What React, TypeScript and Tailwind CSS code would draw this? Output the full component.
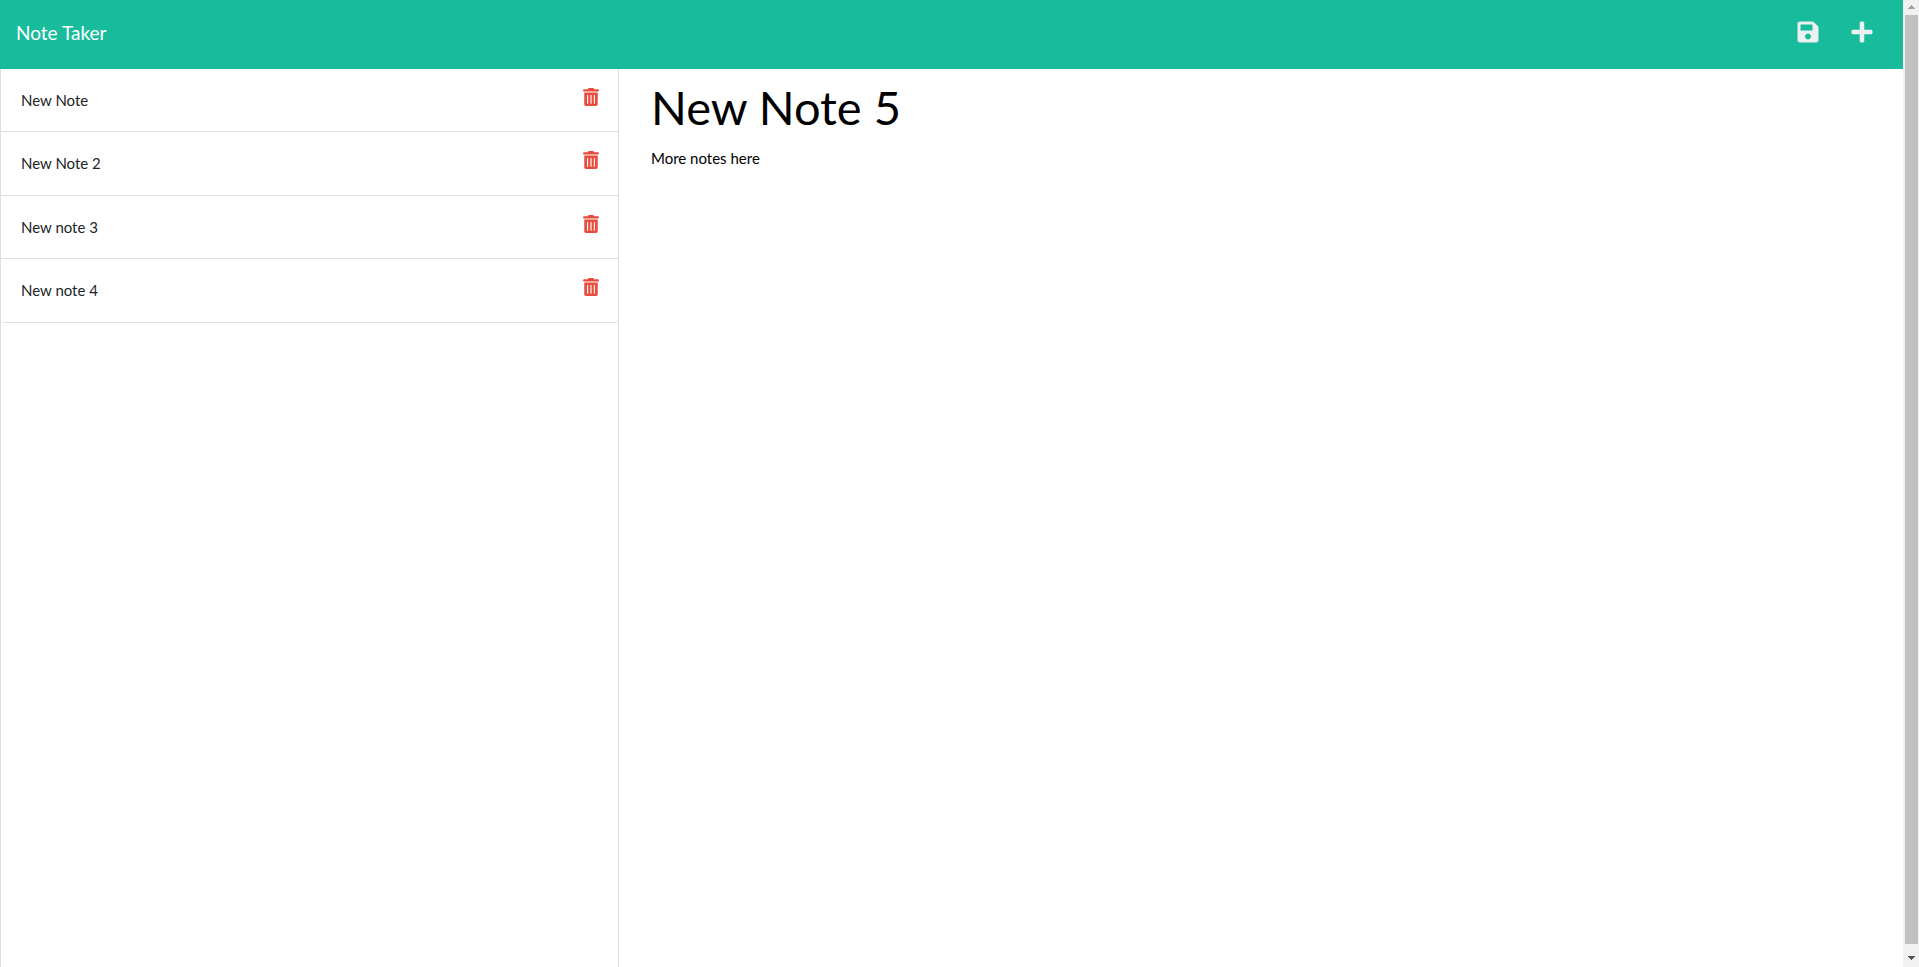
import { FaPlus, FaSave } from "react-icons/fa";

const notes = ["New Note", "New Note 2", "New note 3", "New note 4"];

function TrashIcon() {
  return (
    <svg viewBox="0 0 448 512" className="h-[18px] w-4" fill="currentColor" aria-hidden="true">
      <path d="M0 84V56c0-13.3 10.7-24 24-24h112l9.4-18.7c4-8.2 12.3-13.3 21.4-13.3h114.3c9.1 0 17.4 5.1 21.5 13.3L312 32h112c13.3 0 24 10.7 24 24v28c0 6.6-5.4 12-12 12H12c-6.6 0-12-5.4-12-12zm416 56v324c0 26.5-21.5 48-48 48H80c-26.5 0-48-21.5-48-48V140c0-6.6 5.4-12 12-12h360c6.6 0 12 5.4 12 12zm-272 68c0-8.8-7.2-16-16-16s-16 7.2-16 16v224c0 8.8 7.2 16 16 16s16-7.2 16-16V208zm96 0c0-8.8-7.2-16-16-16s-16 7.2-16 16v224c0 8.8 7.2 16 16 16s16-7.2 16-16V208zm96 0c0-8.8-7.2-16-16-16s-16 7.2-16 16v224c0 8.8 7.2 16 16 16s16-7.2 16-16V208z" />
    </svg>
  );
}

function Header() {
  return (
    <header className="flex items-start justify-between bg-[#18bc9c] pr-[30px] pl-4 pb-6 pt-5">
      <a href="#" className="text-[19px] leading-[25px] text-white">
        Note Taker
      </a>
      <div className="flex gap-8">
        <button type="button" aria-label="Save note" className="text-[#ecf0f1]">
          <FaSave className="h-6 w-[22px]" />
        </button>
        <button type="button" aria-label="New note" className="text-[#ecf0f1]">
          <FaPlus className="h-6 w-[22px]" />
        </button>
      </div>
    </header>
  );
}

function NoteList() {
  return (
    <aside className="w-[619px] shrink-0 border-x border-[#dfdfdf]">
      <ul className="grid min-h-[254px] auto-rows-fr overflow-hidden rounded-b border-b border-[#dfdfdf]">
        {notes.map((note) => (
          <li
            key={note}
            className="flex items-start justify-between border-b border-[#dfdfdf] pt-[19px] pr-[19px] pl-5 text-[#212529] last:border-b-0"
          >
            <span className="text-[15px] leading-6">{note}</span>
            <button type="button" aria-label={`Delete ${note}`} className="text-[#e74c3c]">
              <TrashIcon />
            </button>
          </li>
        ))}
      </ul>
    </aside>
  );
}

function Editor() {
  return (
    <main className="flex grow flex-col pt-[3px] pr-8 pl-8">
      <input
        type="text"
        aria-label="Note title"
        defaultValue="New Note 5"
        className="h-[70px] w-full text-[47px] outline-none"
      />
      <textarea
        aria-label="Note text"
        defaultValue="More notes here"
        className="mt-1 w-full grow resize-none text-[15px] leading-6 outline-none"
      />
    </main>
  );
}

function ScrollBar() {
  return (
    <div className="flex w-4 shrink-0 flex-col bg-[#f1f1f1]" aria-hidden="true">
      <svg viewBox="0 0 16 15" className="h-[15px] w-4" shapeRendering="crispEdges">
        <path d="M5 9h7v-1h-1v-1h-1v-1h-1v-1h-1v1h-1v1h-1v1h-1z" fill="#a3a3a3" />
      </svg>
      <div className="mr-px ml-0.5 grow bg-[#c1c1c1]" />
      <svg viewBox="0 0 16 23" className="h-[23px] w-4" shapeRendering="crispEdges">
        <path d="M5 12h7v1h-1v1h-1v1h-1v1h-1v-1h-1v-1h-1v-1h-1z" fill="#505050" />
      </svg>
    </div>
  );
}

export default function App() {
  return (
    <div className="flex min-h-screen bg-white font-[Lato,sans-serif] text-black">
      <div className="flex min-w-0 grow flex-col">
        <Header />
        <div className="flex grow">
          <NoteList />
          <Editor />
        </div>
      </div>
      <ScrollBar />
    </div>
  );
}
